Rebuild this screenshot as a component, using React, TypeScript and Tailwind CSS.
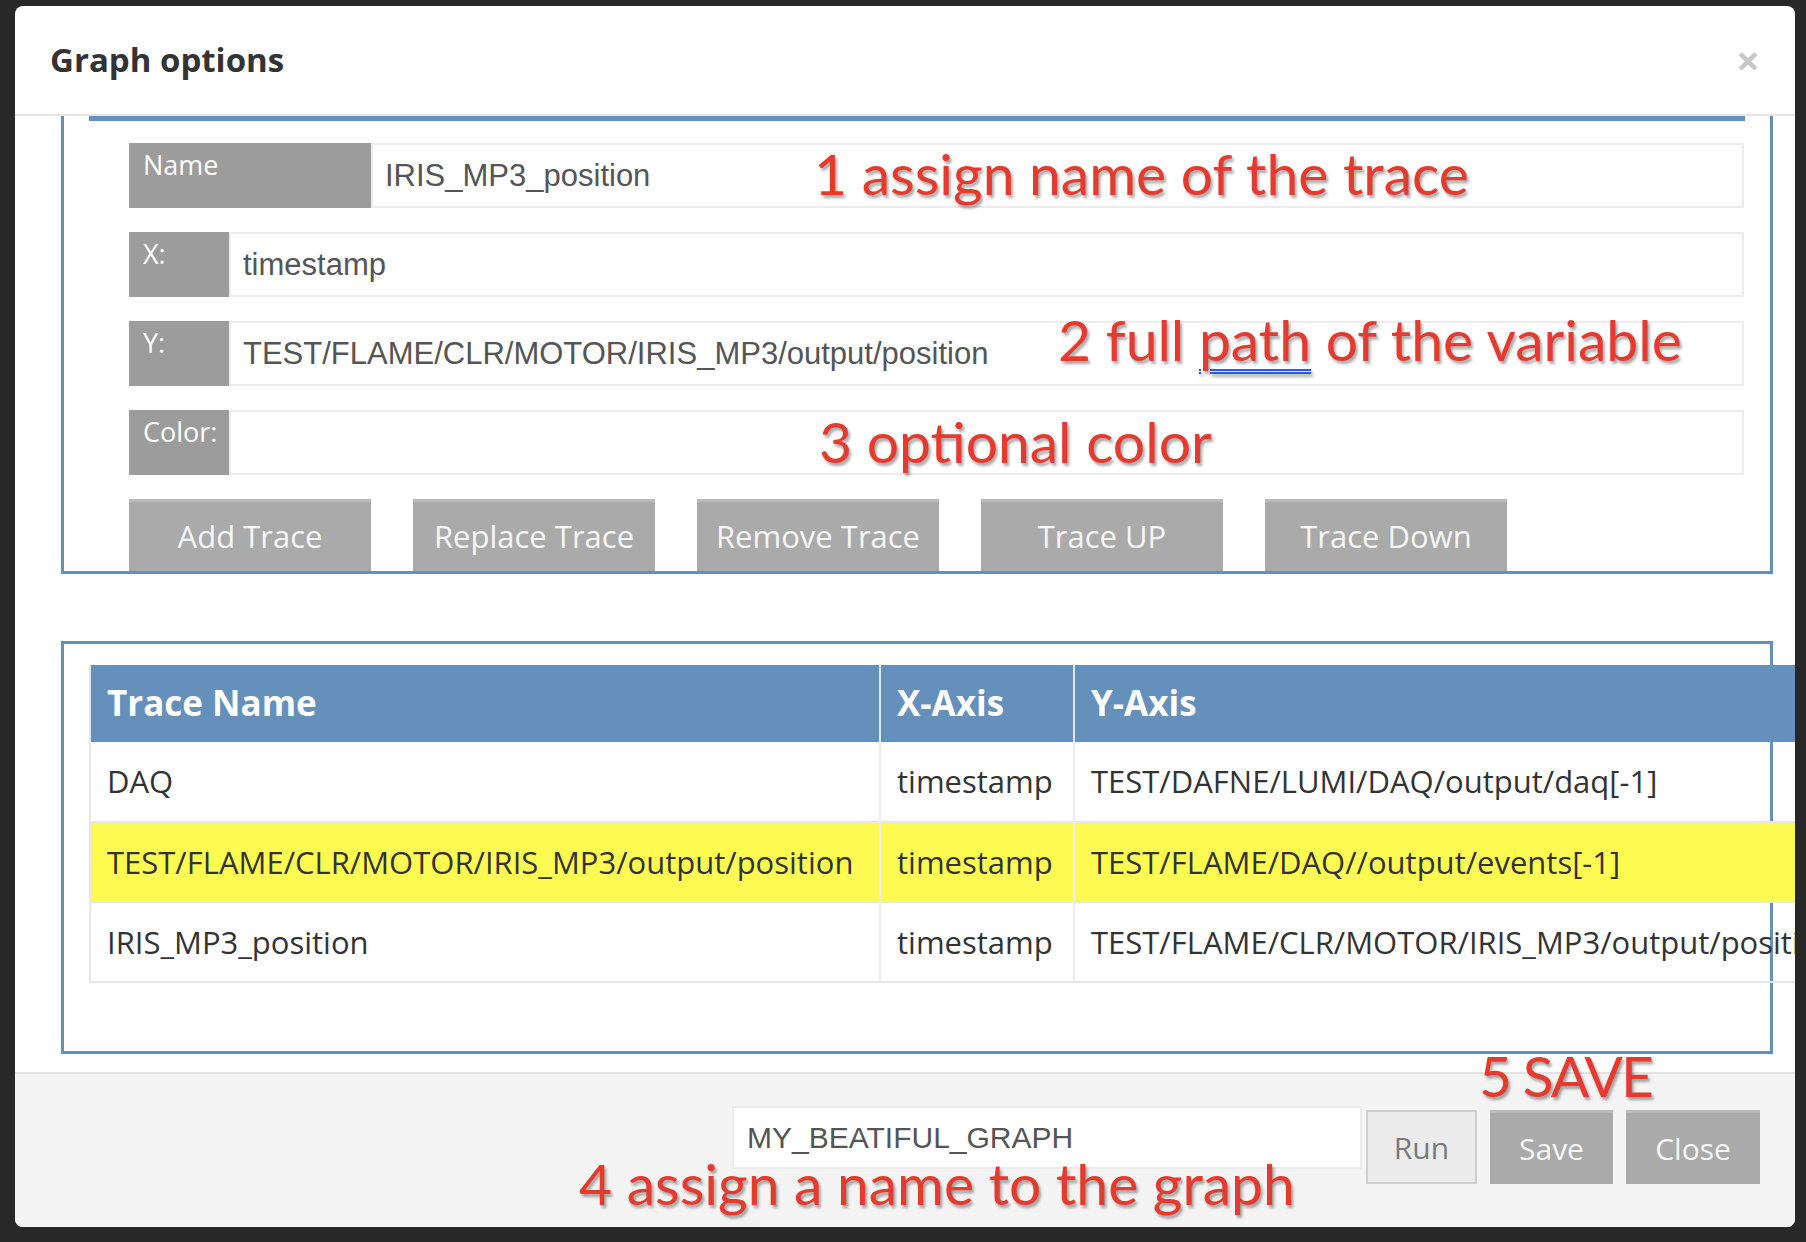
import React from "react";

const fieldRows = [
  { label: "Name", value: "IRIS_MP3_position", labelWidth: "w-[242px]" },
  { label: "X:", value: "timestamp", labelWidth: "w-[100px]" },
  { label: "Y:", value: "TEST/FLAME/CLR/MOTOR/IRIS_MP3/output/position", labelWidth: "w-[100px]" },
  { label: "Color:", value: "", labelWidth: "w-[100px]" },
];

const traceButtons = ["Add Trace", "Replace Trace", "Remove Trace", "Trace UP", "Trace Down"];

const traces = [
  { name: "DAQ", x: "timestamp", y: "TEST/DAFNE/LUMI/DAQ/output/daq[-1]", selected: false },
  {
    name: "TEST/FLAME/CLR/MOTOR/IRIS_MP3/output/position",
    x: "timestamp",
    y: "TEST/FLAME/DAQ//output/events[-1]",
    selected: true,
  },
  {
    name: "IRIS_MP3_position",
    x: "timestamp",
    y: "TEST/FLAME/CLR/MOTOR/IRIS_MP3/output/position",
    selected: false,
  },
];

const annotation =
  "absolute leading-none whitespace-nowrap font-['Lato',sans-serif] text-[57px] text-[#e63a2e] [text-shadow:2px_3px_3px_rgba(0,0,0,0.35)]";

const GraphOptions = () => {
  return (
    <div className="relative w-[1806px] h-[1242px] overflow-hidden bg-[#282828] pt-[6px] pl-[15px]">
      <div className="w-[1780px] h-[1221px] bg-white rounded-[8px] overflow-hidden flex flex-col font-['Open_Sans',sans-serif]">
        {/* header */}
        <div className="h-[110px] shrink-0 border-b-2 border-[#e5e5e5] flex items-center justify-between pl-[35px] pr-[35px]">
          <h1 className="text-[33px] font-bold text-[#333]">Graph options</h1>
          <span className="text-[42px] font-bold leading-none text-[#c8c8c8]">×</span>
        </div>

        {/* body */}
        <div className="h-[956px] shrink-0 overflow-hidden pl-[46px] pr-[22px]">
          <div className="h-[458px] border-x-[3px] border-b-[3px] border-[#6590bb]">
            <div className="ml-[25px] mr-[25px] h-[5px] bg-[#6590bb]" />
            <div className="mt-[22px] pl-[65px] pr-[26px] flex flex-col gap-[24px]">
              {fieldRows.map((row) => (
                <div key={row.label} className="flex h-[65px]">
                  <div
                    className={`${row.labelWidth} shrink-0 bg-[#9c9c9c] text-white text-[27px] pl-[14px] pt-[2px]`}
                  >
                    {row.label}
                  </div>
                  <input
                    readOnly
                    value={row.value}
                    className="flex-1 min-w-0 h-full bg-white border-2 border-[#ececec] px-[12px] text-[31px] text-[#555] font-['Liberation_Sans',Arial,sans-serif] outline-none"
                  />
                </div>
              ))}
            </div>
            <div className="mt-[24px] pl-[65px] flex gap-[42px]">
              {traceButtons.map((b) => (
                <button
                  key={b}
                  className="w-[242px] h-[72px] bg-[#aaaaaa] border-t-[3px] border-[#bababa] text-[31px] text-[#f6f6f6]"
                >
                  {b}
                </button>
              ))}
            </div>
          </div>

          <div className="mt-[67px] h-[413px] border-[3px] border-[#6590bb] pt-[21px] pl-[25px]">
            <table className="w-[1772px] table-fixed border-collapse border-l-2 border-[#e6e6e6] text-[31px] text-[#333]">
              <colgroup>
                <col className="w-[790px]" />
                <col className="w-[194px]" />
                <col />
              </colgroup>
              <thead>
                <tr className="h-[77px] bg-[#6590bb] text-white text-left">
                  <th className="pl-[16px] font-bold text-[35px] border-r-2 border-[#e4e9ef]">Trace Name</th>
                  <th className="pl-[16px] font-bold text-[35px] border-r-2 border-[#e4e9ef]">X-Axis</th>
                  <th className="pl-[16px] font-bold text-[35px]">Y-Axis</th>
                </tr>
              </thead>
              <tbody>
                {traces.map((t) => (
                  <tr
                    key={t.name}
                    className={`h-[80px] border-b-2 border-[#e6e6e6] ${t.selected ? "bg-[#fdfb52]" : ""}`}
                  >
                    <td className="pl-[16px] whitespace-nowrap border-r-2 border-[#ececec]">{t.name}</td>
                    <td className="pl-[16px] whitespace-nowrap border-r-2 border-[#ececec]">{t.x}</td>
                    <td className="pl-[16px] whitespace-nowrap">{t.y}</td>
                  </tr>
                ))}
              </tbody>
            </table>
          </div>
        </div>

        {/* footer */}
        <div className="flex-1 border-t-2 border-[#e3e3e3] bg-[#f4f4f4] flex justify-end items-start pt-[32px] pr-[35px]">
          <input
            readOnly
            value="MY_BEATIFUL_GRAPH"
            className="w-[630px] h-[63px] bg-white border-2 border-[#ececec] px-[13px] text-[30px] text-[#555] font-['Liberation_Sans',Arial,sans-serif] outline-none"
          />
          <button className="ml-[4px] mt-[4px] w-[111px] h-[74px] bg-[#ececec] border-2 border-[#cfcfcf] text-[30px] text-[#7a7a7a]">
            Run
          </button>
          <button className="ml-[13px] mt-[4px] w-[123px] h-[74px] bg-[#aaaaaa] border-t-[3px] border-[#bababa] text-[30px] text-[#f6f6f6]">
            Save
          </button>
          <button className="ml-[13px] mt-[4px] w-[134px] h-[74px] bg-[#aaaaaa] border-t-[3px] border-[#bababa] text-[30px] text-[#f6f6f6]">
            Close
          </button>
        </div>
      </div>

      {/* red annotations drawn over the dialog */}
      <div className={`${annotation} left-[814px] top-[145px]`}>1 assign name of the trace</div>
      <div className={`${annotation} left-[1058px] top-[311px]`}>
        2 full <span className="underline decoration-double decoration-[#2f5bd3] decoration-2 underline-offset-[8px]">path</span> of the variable
      </div>
      <div className={`${annotation} left-[819px] top-[413px]`}>3 optional color</div>
      <div className={`${annotation} left-[1479px] top-[1047px] tracking-[-2px]`}>5 SAVE</div>
      <div className={`${annotation} left-[579px] top-[1155px]`}>4 assign a name to the graph</div>
    </div>
  );
};

export default function App() {
  return <GraphOptions />;
}
